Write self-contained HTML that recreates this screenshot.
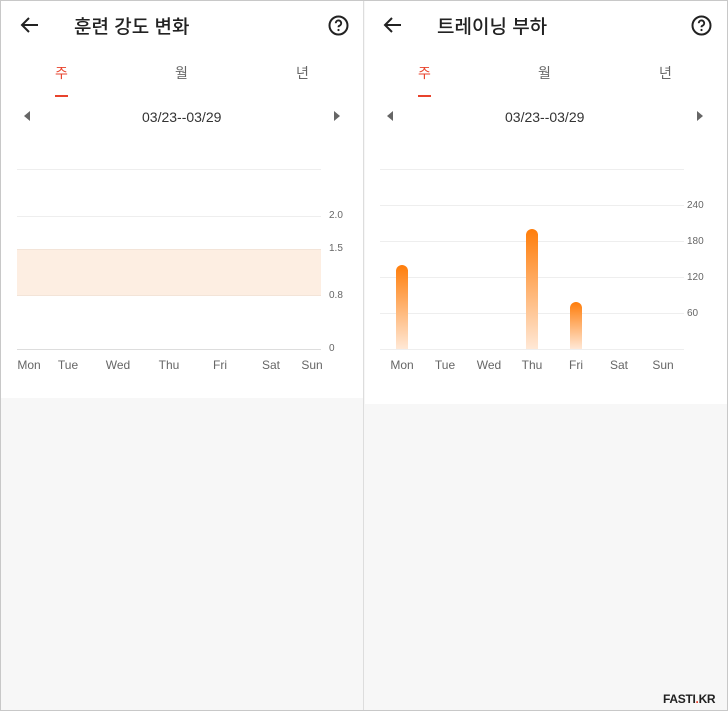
<!DOCTYPE html><html><head><meta charset="utf-8"><style>
*{margin:0;padding:0;box-sizing:border-box}
body{width:728px;height:711px;position:relative;background:#f7f7f7;font-family:"Liberation Sans","Noto Sans CJK KR",sans-serif;overflow:hidden}
.frame{position:absolute;inset:0;border:1px solid #c8c8c8;z-index:10;pointer-events:none}
.p{position:absolute;top:0;background:#fff}
.a{position:absolute;white-space:nowrap}
.t{font-size:19px;font-weight:500;color:#222;top:12px}
.tab{font-size:14px;color:#666;top:63px}
.date{font-size:14px;color:#333;top:109px}
.gl{position:absolute;height:1px;background:#eee}
.yl{position:absolute;font-size:10px;color:#666}
.d{position:absolute;font-size:12px;color:#666;top:358px;transform:translateX(-50%)}
.bar{position:absolute;width:12px;border-radius:6px 6px 0 0;background:linear-gradient(#ff7d0a,#ffe8d6)}
</style></head><body>
<div class="frame"></div>
<div class="p" style="left:0;width:363px;height:398px"></div>
<div class="p" style="left:365px;width:362px;height:404px"></div>
<div style="position:absolute;left:363px;top:0;width:1px;height:711px;background:#ddd"></div>

<!-- left -->
<svg class="a" style="left:20px;top:16px" width="20" height="18" viewBox="0 0 20 18"><path d="M18 9H3M9 2L2 9l7 7" stroke="#222" stroke-width="2" fill="none"/></svg>
<div class="a t" style="left:74px">훈련 강도 변화</div>
<svg class="a" style="left:328px;top:15px" width="21" height="21" viewBox="0 0 21 21"><circle cx="10.5" cy="10.5" r="9" stroke="#222" stroke-width="2" fill="none"/><path d="M7.8 8.2a2.7 2.7 0 1 1 3.6 2.5c-.7.3-.9.8-.9 1.6" stroke="#222" stroke-width="1.9" fill="none"/><circle cx="10.5" cy="15" r="1.1" fill="#222"/></svg>
<div class="a tab" style="left:55px;color:#e8432c">주</div>
<div style="position:absolute;left:55px;top:95px;width:13px;height:2px;background:#e8432c"></div>
<div class="a tab" style="left:175px">월</div>
<div class="a tab" style="left:296px">년</div>
<div class="a" style="left:24px;top:111px;width:0;height:0;border:5px solid transparent;border-right:6px solid #666;border-left:0"></div>
<div class="a date" style="left:142px">03/23--03/29</div>
<div class="a" style="left:334px;top:111px;width:0;height:0;border:5px solid transparent;border-left:6px solid #666;border-right:0"></div>
<div class="gl" style="left:17px;width:304px;top:169px"></div>
<div class="gl" style="left:17px;width:304px;top:216px"></div>
<div style="position:absolute;left:17px;width:304px;top:249px;height:47px;background:#fdeee2;border-top:1px solid #f3e4d8;border-bottom:1px solid #f3e4d8"></div>
<div class="gl" style="left:17px;width:304px;top:349px;background:#ddd"></div>
<div class="yl" style="left:329px;top:210px">2.0</div>
<div class="yl" style="left:329px;top:243px">1.5</div>
<div class="yl" style="left:329px;top:290px">0.8</div>
<div class="yl" style="left:329px;top:343px">0</div>
<div class="d" style="left:29px">Mon</div><div class="d" style="left:68px">Tue</div><div class="d" style="left:118px">Wed</div><div class="d" style="left:169px">Thu</div><div class="d" style="left:220px">Fri</div><div class="d" style="left:271px">Sat</div><div class="d" style="left:312px">Sun</div>

<!-- right -->
<svg class="a" style="left:383px;top:16px" width="20" height="18" viewBox="0 0 20 18"><path d="M18 9H3M9 2L2 9l7 7" stroke="#222" stroke-width="2" fill="none"/></svg>
<div class="a t" style="left:437px">트레이닝 부하</div>
<svg class="a" style="left:691px;top:15px" width="21" height="21" viewBox="0 0 21 21"><circle cx="10.5" cy="10.5" r="9" stroke="#222" stroke-width="2" fill="none"/><path d="M7.8 8.2a2.7 2.7 0 1 1 3.6 2.5c-.7.3-.9.8-.9 1.6" stroke="#222" stroke-width="1.9" fill="none"/><circle cx="10.5" cy="15" r="1.1" fill="#222"/></svg>
<div class="a tab" style="left:418px;color:#e8432c">주</div>
<div style="position:absolute;left:418px;top:95px;width:13px;height:2px;background:#e8432c"></div>
<div class="a tab" style="left:538px">월</div>
<div class="a tab" style="left:659px">년</div>
<div class="a" style="left:387px;top:111px;width:0;height:0;border:5px solid transparent;border-right:6px solid #666;border-left:0"></div>
<div class="a date" style="left:505px">03/23--03/29</div>
<div class="a" style="left:697px;top:111px;width:0;height:0;border:5px solid transparent;border-left:6px solid #666;border-right:0"></div>
<div class="gl" style="left:380px;width:304px;top:169px"></div>
<div class="gl" style="left:380px;width:304px;top:205px"></div>
<div class="gl" style="left:380px;width:304px;top:241px"></div>
<div class="gl" style="left:380px;width:304px;top:277px"></div>
<div class="gl" style="left:380px;width:304px;top:313px"></div>
<div class="gl" style="left:380px;width:304px;top:349px"></div>
<div class="yl" style="left:687px;top:200px">240</div>
<div class="yl" style="left:687px;top:236px">180</div>
<div class="yl" style="left:687px;top:272px">120</div>
<div class="yl" style="left:687px;top:308px">60</div>
<div class="bar" style="left:396px;top:265px;height:84px"></div>
<div class="bar" style="left:526px;top:229px;height:120px"></div>
<div class="bar" style="left:570px;top:302px;height:47px"></div>
<div class="d" style="left:402px">Mon</div><div class="d" style="left:445px">Tue</div><div class="d" style="left:489px">Wed</div><div class="d" style="left:532px">Thu</div><div class="d" style="left:576px">Fri</div><div class="d" style="left:619px">Sat</div><div class="d" style="left:663px">Sun</div>

<div class="a" style="left:663px;top:692px;font-size:12px;font-weight:bold;color:#222;letter-spacing:-0.3px">FASTI<span style="color:#e8432c">.</span>KR</div>
</body></html>
